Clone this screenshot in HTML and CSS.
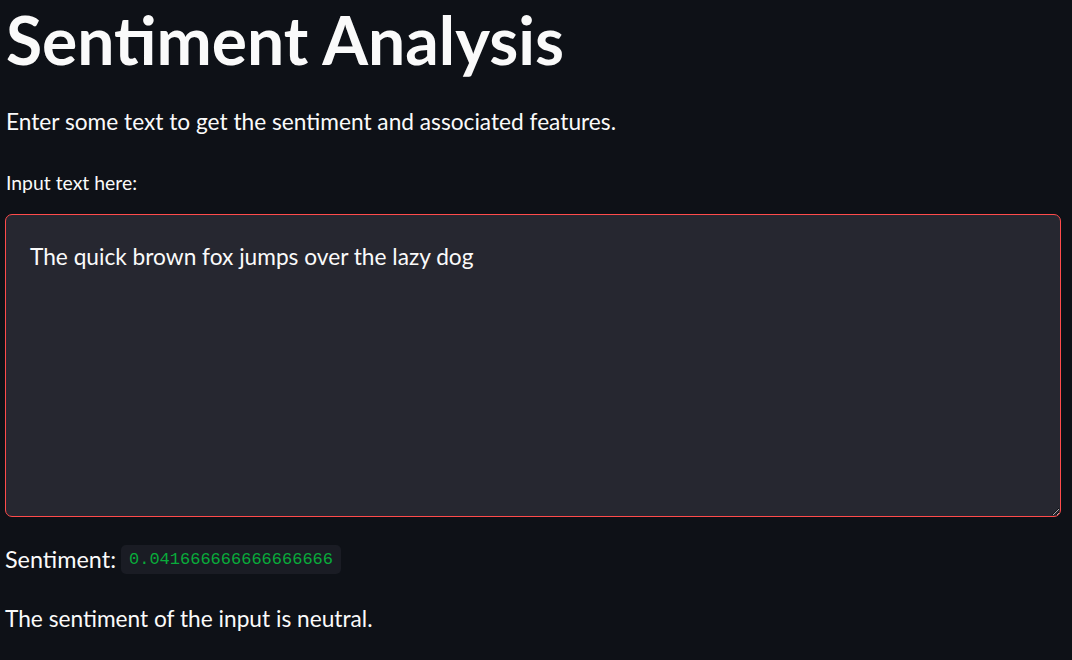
FILE: index.html
```html
<!DOCTYPE html>
<html lang="en">
<head>
<meta charset="utf-8">
<title>Sentiment Analysis</title>
<link rel="stylesheet" href="styles.css">
</head>
<body>
<main class="app">
  <h1 class="title">Sentiment Analysis</h1>
  <p class="intro">Enter some text to get the sentiment and associated features.</p>
  <label class="field-label" for="txt">Input text here:</label>
  <div class="textarea-wrap">
    <textarea id="txt" class="textarea">The quick brown fox jumps over the lazy dog</textarea>
  </div>
  <p class="result"><span class="result-label">Sentiment:</span><code class="code">0.041666666666666666</code></p>
  <p class="verdict">The sentiment of the input is neutral.</p>
</main>
</body>
</html>
```
FILE: styles.css
```css
* { box-sizing: border-box; }
html, body { margin: 0; padding: 0; background: #0e1117; }
body {
  color: #fafafa;
  font-family: "Lato", "Noto Sans", sans-serif;
  overflow: hidden;
}
.app {
  display: flex;
  flex-direction: column;
  align-items: stretch;
  padding: 0 11px 0 5px;
}
.title {
  margin: 0;
  padding: 2px 0 0 1px;
  font-size: 66px;
  font-weight: 700;
  line-height: 76px;
}
.intro {
  margin: 28px 0 0 1px;
  font-size: 22.7px;
  line-height: 32px;
}
.field-label {
  margin: 33px 0 0 1px;
  font-size: 19.4px;
  line-height: 24px;
}
.textarea-wrap {
  margin-top: 19px;
  height: 303px;
  display: flex;
}
.textarea {
  flex: 1;
  resize: vertical;
  background: #262730;
  border: 1px solid #ff4b4b;
  border-radius: 7px;
  color: #fafafa;
  font-family: inherit;
  font-size: 22.7px;
  line-height: 30px;
  padding: 27px 24px 25px;
  outline: none;
}
.result {
  margin: 28px 0 0 0;
  display: flex;
  align-items: center;
  gap: 5px;
}
.result-label {
  font-size: 23.4px;
  line-height: 29px;
}
.code {
  font-family: "Liberation Mono", "DejaVu Sans Mono", monospace;
  font-size: 17px;
  color: #09ab3b;
  background: #1a1c24;
  border-radius: 5px;
  padding: 3px 8px;
  line-height: 23px;
}
.verdict {
  margin: 30px 0 0 0;
  font-size: 22.7px;
  line-height: 30px;
}
```
